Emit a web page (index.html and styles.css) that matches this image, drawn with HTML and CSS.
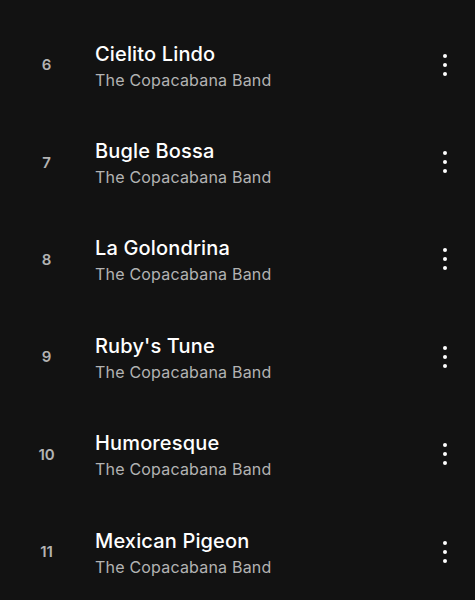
FILE: index.html
```html
<!DOCTYPE html>
<html lang="en">
<head>
    <meta charset="UTF-8">
    <meta name="viewport" content="width=device-width, initial-scale=1.0">
    <title>Tracks</title>
    <link rel="stylesheet" href="styles.css">
</head>
<body>
    <div class="track-list">
        <div class="track">
            <span class="track-num">6</span>
            <div class="track-info">
                <div class="track-title">Cielito Lindo</div>
                <div class="track-artist">The Copacabana Band</div>
            </div>
            <button class="more" aria-label="More options">
                <svg width="6" height="24" viewBox="0 0 6 24"><circle cx="3" cy="3" r="2"/><circle cx="3" cy="12" r="2"/><circle cx="3" cy="21" r="2"/></svg>
            </button>
        </div>
        <div class="track">
            <span class="track-num">7</span>
            <div class="track-info">
                <div class="track-title">Bugle Bossa</div>
                <div class="track-artist">The Copacabana Band</div>
            </div>
            <button class="more" aria-label="More options">
                <svg width="6" height="24" viewBox="0 0 6 24"><circle cx="3" cy="3" r="2"/><circle cx="3" cy="12" r="2"/><circle cx="3" cy="21" r="2"/></svg>
            </button>
        </div>
        <div class="track">
            <span class="track-num">8</span>
            <div class="track-info">
                <div class="track-title">La Golondrina</div>
                <div class="track-artist">The Copacabana Band</div>
            </div>
            <button class="more" aria-label="More options">
                <svg width="6" height="24" viewBox="0 0 6 24"><circle cx="3" cy="3" r="2"/><circle cx="3" cy="12" r="2"/><circle cx="3" cy="21" r="2"/></svg>
            </button>
        </div>
        <div class="track">
            <span class="track-num">9</span>
            <div class="track-info">
                <div class="track-title">Ruby's Tune</div>
                <div class="track-artist">The Copacabana Band</div>
            </div>
            <button class="more" aria-label="More options">
                <svg width="6" height="24" viewBox="0 0 6 24"><circle cx="3" cy="3" r="2"/><circle cx="3" cy="12" r="2"/><circle cx="3" cy="21" r="2"/></svg>
            </button>
        </div>
        <div class="track">
            <span class="track-num">10</span>
            <div class="track-info">
                <div class="track-title">Humoresque</div>
                <div class="track-artist">The Copacabana Band</div>
            </div>
            <button class="more" aria-label="More options">
                <svg width="6" height="24" viewBox="0 0 6 24"><circle cx="3" cy="3" r="2"/><circle cx="3" cy="12" r="2"/><circle cx="3" cy="21" r="2"/></svg>
            </button>
        </div>
        <div class="track">
            <span class="track-num">11</span>
            <div class="track-info">
                <div class="track-title">Mexican Pigeon</div>
                <div class="track-artist">The Copacabana Band</div>
            </div>
            <button class="more" aria-label="More options">
                <svg width="6" height="24" viewBox="0 0 6 24"><circle cx="3" cy="3" r="2"/><circle cx="3" cy="12" r="2"/><circle cx="3" cy="21" r="2"/></svg>
            </button>
        </div>
    </div>
</body>
</html>
```

FILE: styles.css
```css
* {
    box-sizing: border-box;
    margin: 0;
    padding: 0;
}

body {
    background: #121212;
    font-family: 'Inter', 'Noto Sans', sans-serif;
    color: #fff;
    overflow: hidden;
}

.track-list {
    padding-top: 16px;
}

.track {
    display: flex;
    align-items: center;
    height: 97.4px;
}

.track-num {
    width: 95px;
    text-align: center;
    font-size: 15px;
    font-weight: 600;
    color: #b3b3b3;
    padding-right: 2px;
}

.track-info {
    flex: 1;
    display: flex;
    flex-direction: column;
    gap: 4px;
    padding-top: 2px;
}

.track-title {
    font-size: 20px;
    font-weight: 500;
    letter-spacing: 0.15px;
    color: #fff;
    line-height: 24px;
}

.track-artist {
    font-size: 16px;
    letter-spacing: 0.2px;
    color: #b3b3b3;
    line-height: 20px;
}

.more {
    background: none;
    border: none;
    width: 60px;
    height: 40px;
    display: flex;
    align-items: center;
    justify-content: center;
    padding-right: 1px;
}

.more svg {
    fill: #fff;
}
```
